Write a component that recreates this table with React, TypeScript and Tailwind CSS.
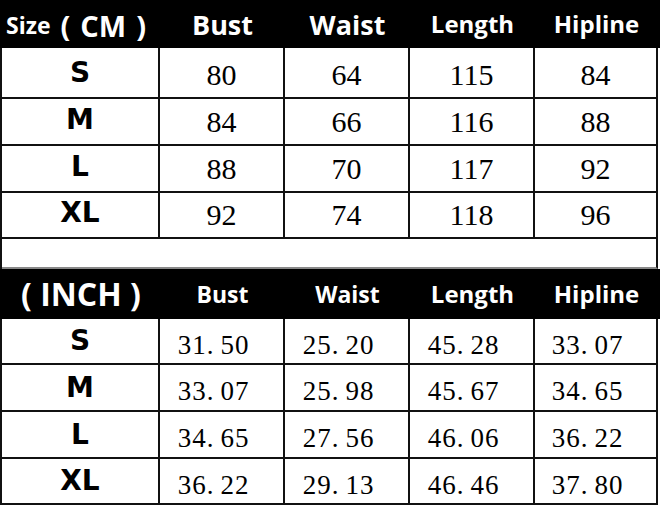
const COLS = 'grid grid-cols-[158px_125px_125px_125px_123px]';

const cmRows = [
  ['S', '80', '64', '115', '84'],
  ['M', '84', '66', '116', '88'],
  ['L', '88', '70', '117', '92'],
  ['XL', '92', '74', '118', '96'],
];

const inchRows = [
  ['S', '31.50', '25.20', '45.28', '33.07'],
  ['M', '33.07', '25.98', '45.67', '34.65'],
  ['L', '34.65', '27.56', '46.06', '36.22'],
  ['XL', '36.22', '29.13', '46.46', '37.80'],
];

const headFont = "font-['Open_Sans',sans-serif] font-bold text-white";
const sizeFont = "font-['DejaVu_Sans',sans-serif] font-bold text-[28px] text-black";
const numFont = "font-['Liberation_Serif',serif] text-black";

function Cell({ children, className = '' }: { children?: React.ReactNode; className?: string }) {
  return (
    <div className={`flex items-center justify-center border-r-2 border-b-2 border-[#111] ${className}`}>
      {children}
    </div>
  );
}

// inch values are printed with a wide gap after the decimal point
function Inch({ v }: { v: string }) {
  const [a, b] = v.split('.');
  return (
    <span className="whitespace-pre tracking-[1px]">
      {a}.<span className="ml-[6px]">{b}</span>
    </span>
  );
}

export default function App() {
  const cmHeights = ['h-[47px]', 'h-[47px]', 'h-[46px]', 'h-[47px]'];
  const inchHeights = ['h-[46px]', 'h-[47px]', 'h-[47px]', 'h-[46px]'];

  return (
    <div className="w-[660px] h-[509px] bg-white overflow-hidden">
      {/* CM header */}
      <div className={`${COLS} h-[48px] w-[660px] bg-black pl-[2px]`}>
        <div className={`${headFont} flex items-center pl-[4px] pt-[2px] leading-none`}>
          <span className="text-[23px]">Size</span>
          <span className="ml-[10px] text-[29px]">(</span>
          <span className="ml-[10px] text-[29px]">CM</span>
          <span className="ml-[10px] text-[29px]">)</span>
        </div>
        <div className={`${headFont} flex items-center justify-center text-[27px] pt-[2px]`}>Bust</div>
        <div className={`${headFont} flex items-center justify-center text-[27px] pt-[2px]`}>Waist</div>
        <div className={`${headFont} flex items-center justify-center text-[24px]`}>Length</div>
        <div className={`${headFont} flex items-center justify-center text-[24px]`}>Hipline</div>
      </div>

      <div className="w-[658px] border-l-2 border-[#111]">
        {cmRows.map((row, i) => (
          <div key={row[0]} className={`${COLS} ${cmHeights[i]}`}>
            <Cell className={sizeFont}>{row[0]}</Cell>
            {row.slice(1).map((v, j) => (
              <Cell key={j} className={`${numFont} text-[30px] pt-1`}>
                {v}
              </Cell>
            ))}
          </div>
        ))}
        <div className="h-[34px] border-r-2 border-b-2 border-r-[#111] border-b-[#888]" />
      </div>

      {/* INCH header */}
      <div className={`${COLS} h-[50px] w-[660px] bg-black pl-[2px]`}>
        <div className={`${headFont} flex items-center justify-center text-[32px] whitespace-pre`}>( INCH )</div>
        <div className={`${headFont} flex items-center justify-center text-[23px]`}>Bust</div>
        <div className={`${headFont} flex items-center justify-center text-[23px]`}>Waist</div>
        <div className={`${headFont} flex items-center justify-center text-[24px]`}>Length</div>
        <div className={`${headFont} flex items-center justify-center text-[24px]`}>Hipline</div>
      </div>

      <div className="w-[658px] border-l-2 border-[#111]">
        {inchRows.map((row, i) => (
          <div key={row[0]} className={`${COLS} ${inchHeights[i]}`}>
            <Cell className={sizeFont}>{row[0]}</Cell>
            {row.slice(1).map((v, j) => (
              <Cell key={j} className={`${numFont} text-[27px] leading-none pr-4 pt-[8px]`}>
                <Inch v={v} />
              </Cell>
            ))}
          </div>
        ))}
      </div>
    </div>
  );
}
